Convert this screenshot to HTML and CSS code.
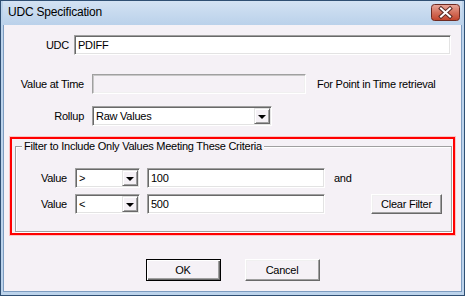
FILE: index.html
```html
<!doctype html>
<html lang="en">
<head>
    <meta charset="UTF-8">
    <title>UDC Specification</title>
    <link rel="stylesheet" href="styles.css">
</head>
<body>
<!--dialog window-->
<div class="window">
    <div class="titlebar">
        <span class="title">UDC Specification</span>
        <div class="close">
            <svg width="29" height="17" viewBox="0 0 29 17">
                <defs>
                    <linearGradient id="red" x1="0" y1="0" x2="0" y2="1">
                        <stop offset="0" stop-color="#e9a99b"/>
                        <stop offset="0.5" stop-color="#d4715d"/>
                        <stop offset="1" stop-color="#c2432b"/>
                    </linearGradient>
                </defs>
                <rect x="0.5" y="0.5" width="28" height="16" rx="3" fill="url(#red)" stroke="#6e2b22"/>
                <path d="M10 4.5 L19 12.5 M19 4.5 L10 12.5" stroke="#5a2a24" stroke-width="4" stroke-linecap="square"/>
                <path d="M10 4.5 L19 12.5 M19 4.5 L10 12.5" stroke="#fff" stroke-width="2" stroke-linecap="square"/>
            </svg>
        </div>
    </div>
    <div class="client">
        <div class="row row-udc">
            <span class="lbl lbl-udc">UDC</span>
            <div class="edit edit-udc">PDIFF</div>
        </div>
        <div class="row row-time">
            <span class="lbl lbl-wide">Value at Time</span>
            <div class="edit edit-time disabled"></div>
            <span class="hint">For Point in Time retrieval</span>
        </div>
        <div class="row row-rollup">
            <span class="lbl lbl-wide">Rollup</span>
            <div class="edit combo combo-rollup">
                <span class="combo-text">Raw Values</span>
                <span class="drop"><i></i></span>
            </div>
        </div>

        <!--red highlight around filter group-->
        <div class="highlight">
            <fieldset class="group">
                <legend>Filter to Include Only Values Meeting These Criteria</legend>
                <div class="row crit crit-1">
                    <span class="lbl lbl-crit">Value</span>
                    <div class="edit combo combo-op">
                        <span class="combo-text">&gt;</span>
                        <span class="drop"><i></i></span>
                    </div>
                    <div class="edit edit-val">100</div>
                    <span class="and">and</span>
                </div>
                <div class="row crit crit-2">
                    <span class="lbl lbl-crit">Value</span>
                    <div class="edit combo combo-op">
                        <span class="combo-text">&lt;</span>
                        <span class="drop"><i></i></span>
                    </div>
                    <div class="edit edit-val">500</div>
                    <button class="btn btn-clear">Clear Filter</button>
                </div>
            </fieldset>
        </div>

        <div class="actions">
            <button class="btn btn-default">OK</button>
            <button class="btn">Cancel</button>
        </div>
    </div>
</div>
</body>
</html>
```

FILE: styles.css
```css
*{
    padding: 0;
    margin: 0;
    box-sizing: border-box;
}
body{
    background: #fff;
    font-family: "Liberation Sans", Arial, sans-serif;
    font-size: 11px;
    color: #000;
}
.window{
    width: 465px;
    height: 296px;
    border: 1px solid #2f4f73;
    background: #bcd3eb;
    padding: 0 2px 3px;
    display: flex;
    flex-direction: column;
}
.titlebar{
    height: 24px;
    flex: none;
    display: flex;
    align-items: center;
    justify-content: space-between;
    padding: 0 2px 2px 5px;
    background: linear-gradient(#d3e2f3, #bad1ea);
}
.title{
    font-size: 12px;
    letter-spacing: -0.2px;
    color: #000;
}
.close{
    width: 29px;
    height: 17px;
    margin-top: 1px;
}
.close svg{
    display: block;
}
.client{
    flex: 1;
    background: #f5f1f6;
    border: 1px solid #7d9cc0;
    border-top: none;
    letter-spacing: -0.25px;
}
.row{
    display: flex;
    align-items: center;
}
.lbl{
    text-align: right;
    flex: none;
}
.lbl-udc{
    width: 65px;
    margin-right: 5px;
}
.lbl-wide{
    width: 80px;
    margin-right: 8px;
}
.row-udc{
    margin-top: 10px;
}
.row-time{
    margin-top: 19px;
}
.row-rollup{
    margin-top: 12px;
}

/* sunken edit boxes */
.edit{
    height: 20px;
    line-height: 16px;
    padding: 1px 3px;
    background: #fff;
    border: 1px solid;
    border-color: #a0a0a0 #fff #fff #a0a0a0;
    box-shadow: inset 1px 1px 0 #696969, inset -1px -1px 0 #e3e3e3;
    flex: none;
}
.edit-udc{
    width: 377px;
}
.edit-time{
    width: 214px;
}
.edit.disabled{
    background: #f5f1f6;
    box-shadow: inset 1px 1px 0 #c8c8c8, inset -1px -1px 0 #f0f0f0;
}
.hint{
    margin-left: 11px;
}
.combo{
    display: flex;
    align-items: center;
    justify-content: space-between;
    padding: 1px 1px 1px 3px;
}
.combo-rollup{
    width: 180px;
}
.drop{
    width: 16px;
    height: 16px;
    background: #f5f1f6;
    border: 1px solid;
    border-color: #e3e3e3 #696969 #696969 #e3e3e3;
    box-shadow: inset 1px 1px 0 #fff, inset -1px -1px 0 #a0a0a0;
    display: flex;
    align-items: center;
    justify-content: center;
}
.drop i{
    width: 0;
    height: 0;
    border-left: 4px solid transparent;
    border-right: 4px solid transparent;
    border-top: 4px solid #000;
    margin-top: 1px;
}

/* red box */
.highlight{
    width: 445px;
    height: 98px;
    margin: 11px 0 0 6px;
    border: 2px solid #ff0000;
    box-shadow: 0 0 0 1px #fbc4c4;
    padding: 1px 0 0 3px;
}
.group{
    width: 437px;
    height: 92px;
    border: 1px solid #a0a0a0;
    box-shadow: 1px 1px 0 #fff, inset 1px 1px 0 #fff;
    padding: 0;
}
.group legend{
    margin-left: 6px;
    padding: 0 2px;
    line-height: 13px;
    background: #f5f1f6;
}
.crit-1{
    margin-top: 15px;
}
.crit-2{
    margin-top: 6px;
}
.lbl-crit{
    width: 51px;
    margin-right: 8px;
}
.combo-op{
    width: 65px;
}
.edit-val{
    width: 178px;
    margin-left: 7px;
}
.and{
    margin-left: 9px;
}

/* raised buttons */
.btn{
    width: 75px;
    height: 22px;
    font-family: "Liberation Sans", Arial, sans-serif;
    font-size: 11px;
    letter-spacing: -0.25px;
    color: #000;
    background: #f5f1f6;
    border: 1px solid;
    border-color: #fff #696969 #696969 #fff;
    box-shadow: inset -1px -1px 0 #a0a0a0, inset 1px 1px 0 #f0f0f0;
}
.btn-clear{
    width: 71px;
    height: 20px;
    margin-left: 46px;
}
.btn-default{
    border: 1px solid #000;
    box-shadow: inset 1px 1px 0 #fff, inset -1px -1px 0 #696969, inset -2px -2px 0 #a0a0a0;
}
.actions{
    display: flex;
    justify-content: center;
    gap: 24px;
    margin-top: 24px;
}
```
